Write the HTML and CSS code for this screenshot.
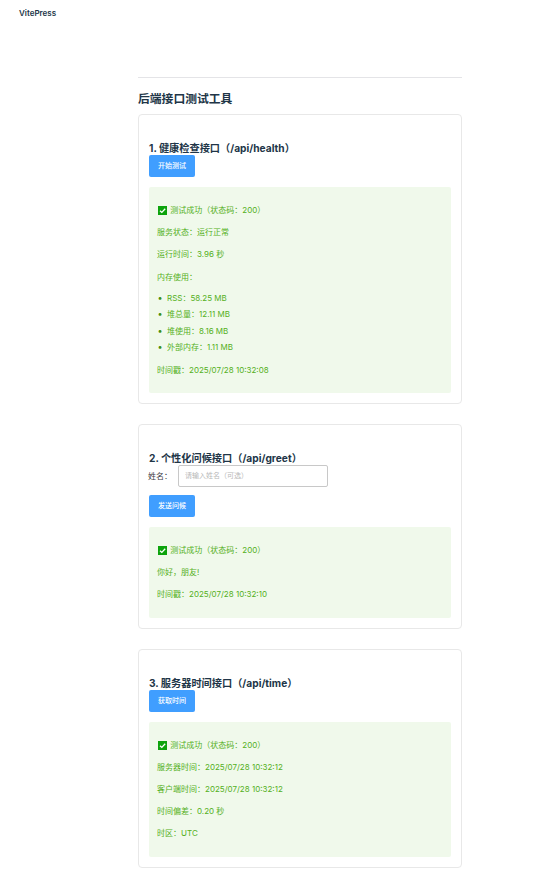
FILE: index.html
```html
<!DOCTYPE html>
<html lang="zh-CN">
<head>
<meta charset="utf-8">
<title>后端接口测试工具</title>
<link rel="stylesheet" href="styles.css">
</head>
<body>
<header class="nav"><span class="brand">VitePress</span></header>
<main class="doc">
  <hr class="rule">
  <h2 class="title">后端接口测试工具</h2>

  <section class="card">
    <h3 class="card-title">1. 健康检查接口（/api/health）</h3>
    <button class="btn" type="button">开始测试</button>
    <div class="result">
      <p class="line"><svg class="check" viewBox="0 0 9 9" aria-hidden="true"><rect width="9" height="9" fill="#0da30d"/><path d="M2 4.8 3.8 6.4 7.2 2.8" fill="none" stroke="#fff" stroke-width="1.3"/></svg> 测试成功（状态码：200）</p>
      <p class="line">服务状态：运行正常</p>
      <p class="line">运行时间：3.96 秒</p>
      <p class="line">内存使用：</p>
      <ul class="list">
        <li>RSS：58.25 MB</li>
        <li>堆总量：12.11 MB</li>
        <li>堆使用：8.16 MB</li>
        <li>外部内存：1.11 MB</li>
      </ul>
      <p class="line">时间戳：2025/07/28 10:32:08</p>
    </div>
  </section>

  <section class="card">
    <h3 class="card-title">2. 个性化问候接口（/api/greet）</h3>
    <div class="field">
      <label class="field-label" for="name">姓名：</label>
      <input class="input" id="name" type="text" placeholder="请输入姓名（可选）">
    </div>
    <button class="btn" type="button">发送问候</button>
    <div class="result">
      <p class="line"><svg class="check" viewBox="0 0 9 9" aria-hidden="true"><rect width="9" height="9" fill="#0da30d"/><path d="M2 4.8 3.8 6.4 7.2 2.8" fill="none" stroke="#fff" stroke-width="1.3"/></svg> 测试成功（状态码：200）</p>
      <p class="line">你好，朋友!</p>
      <p class="line">时间戳：2025/07/28 10:32:10</p>
    </div>
  </section>

  <section class="card">
    <h3 class="card-title">3. 服务器时间接口（/api/time）</h3>
    <button class="btn" type="button">获取时间</button>
    <div class="result">
      <p class="line"><svg class="check" viewBox="0 0 9 9" aria-hidden="true"><rect width="9" height="9" fill="#0da30d"/><path d="M2 4.8 3.8 6.4 7.2 2.8" fill="none" stroke="#fff" stroke-width="1.3"/></svg> 测试成功（状态码：200）</p>
      <p class="line">服务器时间：2025/07/28 10:32:12</p>
      <p class="line">客户端时间：2025/07/28 10:32:12</p>
      <p class="line">时间偏差：0.20 秒</p>
      <p class="line">时区：UTC</p>
    </div>
  </section>
</main>
</body>
</html>
```
FILE: styles.css
```css
* { box-sizing: border-box; }
html, body { margin: 0; padding: 0; background: #fff; }
body {
  font-family: Inter, "Noto Sans CJK SC", sans-serif;
  font-size: 8px;
  line-height: 14.1px;
  color: #3c3c43;
}
.nav { height: 26px; padding: 6px 0 0 19px; }
.brand { font-size: 8px; font-weight: 600; color: #213547; }
.doc { width: 324px; margin-left: 138px; padding-top: 51px; }
.rule { height: 1px; margin: 0; border: 0; background: #e4e4e7; }
.title {
  margin: 13px 0 7px;
  font-size: 11.8px;
  line-height: 16px;
  font-weight: 700;
  color: #213547;
}
.card {
  padding: 10px;
  margin-bottom: 20px;
  border: 1px solid #e8e8e8;
  border-radius: 4px;
  background: #fff;
}
.card-title {
  margin: 16px 0 0;
  font-size: 10.2px;
  line-height: 14px;
  font-weight: 700;
  color: #213547;
}
.btn {
  display: block;
  width: 46px;
  height: 22px;
  padding: 0;
  border: 0;
  border-radius: 2px;
  background: #409eff;
  color: #fff;
  font: inherit;
  font-size: 7px;
  font-weight: 500;
}
.field { display: flex; align-items: center; margin-bottom: 8px; }
.field-label { width: 30px; margin-left: -1px; color: #3c3c43; font-size: 8px; }
.input {
  width: 150px;
  height: 22px;
  padding: 0 6px;
  border: 1px solid #c8c8c8;
  border-radius: 2px;
  font: inherit;
  font-size: 7px;
  background: #fff;
}
.input::placeholder { color: #b8b8b8; }
.result {
  margin-top: 10px;
  padding: 8.3px 8px;
  border-radius: 2px;
  background: #f0f9eb;
  color: #54b022;
}
.line { margin: 8px 0; }
.check { display: inline-block; width: 9px; height: 9px; margin: 0 1px; vertical-align: -1.5px; }
.list { margin: -1px 0 0; padding-left: 10px; }
.list li { margin-top: 2.5px; }
.list li::marker { content: "•\2002"; color: #3f8f14; font-size: 9px; }
```
